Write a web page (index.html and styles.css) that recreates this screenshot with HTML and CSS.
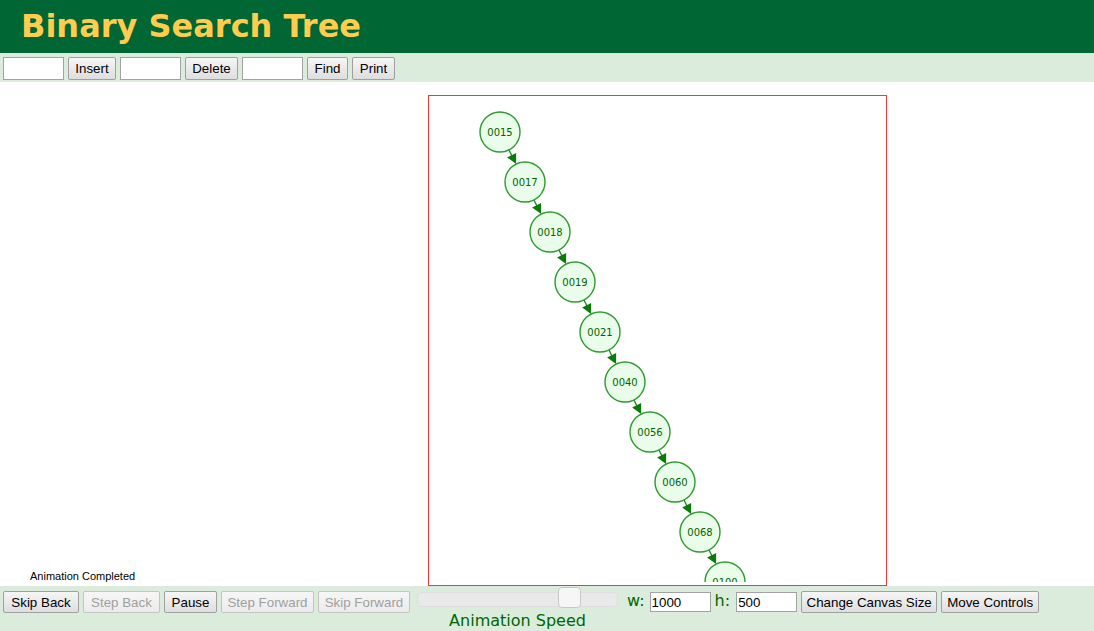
FILE: index.html
```html
<!DOCTYPE html>
<html>
<head>
<meta charset="utf-8">
<title>Binary Search Tree</title>
<link rel="stylesheet" href="styles.css">
</head>
<body>
<header class="banner"><h1 class="title">Binary Search Tree</h1></header>
<div class="toolbar">
  <input class="field" type="text">
  <button class="btn w-insert">Insert</button>
  <input class="field" type="text">
  <button class="btn w-delete">Delete</button>
  <input class="field" type="text">
  <button class="btn w-find">Find</button>
  <button class="btn w-print">Print</button>
</div>
<main class="stage">
  <div class="status">Animation Completed</div>
  <div class="canvas">
    <svg class="tree" width="457" height="489" viewBox="429 96 457 489">
      <defs>
        <clipPath id="clip"><rect x="429" y="96" width="457" height="486"/></clipPath>
        <g id="arrow">
          <line x1="8.9" y1="17.9" x2="12" y2="24" stroke="#1f821f" stroke-width="1.3"/>
          <polygon points="16.1,32.1 7.1,25.4 16.1,21" fill="#0a7a0a"/>
        </g>
      </defs>
      <g clip-path="url(#clip)">
        <use href="#arrow" x="500" y="132"/>
        <use href="#arrow" x="525" y="182"/>
        <use href="#arrow" x="550" y="232"/>
        <use href="#arrow" x="575" y="282"/>
        <use href="#arrow" x="600" y="332"/>
        <use href="#arrow" x="625" y="382"/>
        <use href="#arrow" x="650" y="432"/>
        <use href="#arrow" x="675" y="482"/>
        <use href="#arrow" x="700" y="532"/>
        <g class="node"><circle cx="500" cy="132" r="20"/><text x="500" y="135.5">0015</text></g>
        <g class="node"><circle cx="525" cy="182" r="20"/><text x="525" y="185.5">0017</text></g>
        <g class="node"><circle cx="550" cy="232" r="20"/><text x="550" y="235.5">0018</text></g>
        <g class="node"><circle cx="575" cy="282" r="20"/><text x="575" y="285.5">0019</text></g>
        <g class="node"><circle cx="600" cy="332" r="20"/><text x="600" y="335.5">0021</text></g>
        <g class="node"><circle cx="625" cy="382" r="20"/><text x="625" y="385.5">0040</text></g>
        <g class="node"><circle cx="650" cy="432" r="20"/><text x="650" y="435.5">0056</text></g>
        <g class="node"><circle cx="675" cy="482" r="20"/><text x="675" y="485.5">0060</text></g>
        <g class="node"><circle cx="700" cy="532" r="20"/><text x="700" y="535.5">0068</text></g>
        <g class="node"><circle cx="725" cy="582" r="20"/><text x="725" y="585.5">0100</text></g>
      </g>
    </svg>
  </div>
</main>
<div class="controls">
  <button class="btn w-skipback">Skip Back</button>
  <button class="btn w-stepback" disabled>Step Back</button>
  <button class="btn w-pause">Pause</button>
  <button class="btn w-stepfwd" disabled>Step Forward</button>
  <button class="btn w-skipfwd" disabled>Skip Forward</button>
  <div class="speed">
    <div class="slider"><div class="track"></div><div class="thumb"></div></div>
    <div class="speed-label">Animation Speed</div>
  </div>
  <span class="dim dim-w">w:</span>
  <input class="field size" type="text" value="1000">
  <span class="dim dim-h">h:</span>
  <input class="field size" type="text" value="500">
  <button class="btn w-canvas">Change Canvas Size</button>
  <button class="btn w-move">Move Controls</button>
</div>
</body>
</html>
```

FILE: styles.css
```css
html, body {
  margin: 0;
  padding: 0;
  background: #ffffff;
  overflow: hidden;
}

.banner {
  height: 53px;
  box-sizing: border-box;
  background: #006633;
  padding: 7px 0 0 21px;
}

.title {
  margin: 0;
  font-family: "DejaVu Sans", Verdana, sans-serif;
  font-weight: bold;
  font-size: 32px;
  line-height: 38px;
  color: #ffcc4d;
}

.toolbar {
  height: 29px;
  box-sizing: border-box;
  background: #dcecdc;
  padding: 4px 3px 0;
  display: flex;
  align-items: flex-start;
  gap: 4px;
}

.field {
  box-sizing: border-box;
  width: 61px;
  height: 23px;
  margin: 0;
  padding: 0 1px;
  border: 1px solid #a3a3a3;
  background: #ffffff;
  font-family: "Liberation Sans", Arial, sans-serif;
  font-size: 13.33px;
  color: #000;
  outline: none;
}

.btn {
  box-sizing: border-box;
  height: 23px;
  margin: 0;
  padding: 0;
  border: 1px solid #a0a0a0;
  border-radius: 2px;
  background: linear-gradient(#f6f6f6, #dedede);
  font-family: "Liberation Sans", Arial, sans-serif;
  font-size: 13.33px;
  color: #000000;
  text-align: center;
  white-space: nowrap;
}

.btn:disabled {
  color: #a0a0a0;
  border-color: #c4c4c4;
  background: linear-gradient(#f7f7f7, #ebebeb);
}

.w-insert { width: 48px; }
.w-delete { width: 53px; }
.w-find { width: 41px; }
.w-print { width: 43px; }
.w-skipback { width: 76px; }
.w-stepback { width: 77px; }
.w-pause { width: 53px; }
.w-stepfwd { width: 93px; }
.w-skipfwd { width: 92px; }
.w-canvas { width: 136px; }
.w-move { width: 98px; }

.stage {
  height: 504px;
  display: grid;
  grid-template-columns: 428px 459px;
  align-items: end;
}

.status {
  padding: 0 0 4px 30px;
  font-family: "Liberation Sans", Arial, sans-serif;
  font-size: 11px;
  color: #000;
}

.canvas {
  width: 459px;
  height: 491px;
  box-sizing: border-box;
  border: 1px solid #ff3333;
  background: #ffffff;
  overflow: hidden;
}

.tree {
  display: block;
}

.node circle {
  fill: #eafdea;
  stroke: #2f9a2f;
  stroke-width: 1.4;
}

.node text {
  font-family: "DejaVu Sans", Verdana, sans-serif;
  font-size: 10px;
  fill: #006600;
  text-anchor: middle;
}

.controls {
  height: 45px;
  box-sizing: border-box;
  background: #dcecdc;
  padding: 5px 0 0 3px;
  display: flex;
  align-items: flex-start;
  gap: 4px;
}

.controls .btn {
  height: 22px;
}

.speed {
  margin: -4px 0 0 3px;
  width: 201px;
  display: flex;
  flex-direction: column;
}

.slider {
  position: relative;
  height: 21px;
}

.track {
  margin-top: 5px;
  height: 15px;
  box-sizing: border-box;
  border: 1px solid #dedede;
  border-radius: 5px;
  background: #e9e9e9;
}

.thumb {
  position: absolute;
  left: 141px;
  top: 0;
  width: 23px;
  height: 21px;
  box-sizing: border-box;
  border: 1px solid #c8c8c8;
  border-radius: 4px;
  background: #f6f6f6;
}

.speed-label {
  margin-top: 3px;
  text-align: center;
  font-family: "DejaVu Sans", Verdana, sans-serif;
  font-size: 16px;
  line-height: 19px;
  color: #006600;
}

.dim {
  font-family: "DejaVu Sans", Verdana, sans-serif;
  font-size: 16px;
  line-height: 19px;
  color: #006600;
}

.dim-w {
  margin-left: 5px;
  margin-right: 1px;
}

.dim-h {
  margin-right: 2px;
}

.field.size {
  height: 20px;
  margin-top: 1px;
}
```
